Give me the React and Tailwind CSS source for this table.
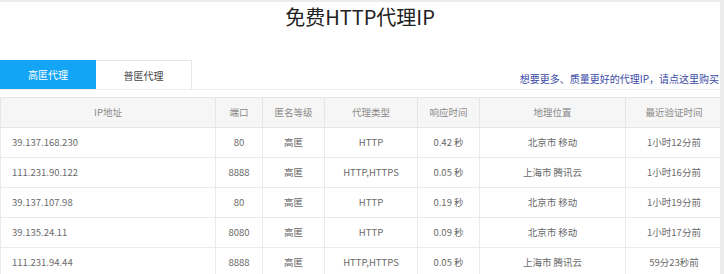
import React from "react";

const ROWS = [
  ["39.137.168.230", "80", "高匿", "HTTP", "0.42 秒", "北京市 移动", "1小时12分前"],
  ["111.231.90.122", "8888", "高匿", "HTTP,HTTPS", "0.05 秒", "上海市 腾讯云", "1小时16分前"],
  ["39.137.107.98", "80", "高匿", "HTTP", "0.19 秒", "北京市 移动", "1小时19分前"],
  ["39.135.24.11", "8080", "高匿", "HTTP", "0.09 秒", "北京市 移动", "1小时17分前"],
  ["111.231.94.44", "8888", "高匿", "HTTP,HTTPS", "0.05 秒", "上海市 腾讯云", "59分23秒前"]
];

const HEADERS = ["IP地址", "端口", "匿名等级", "代理类型", "响应时间", "地理位置", "最近验证时间"];
const WIDTHS = ["w-[215px]", "w-[47px]", "w-[62px]", "w-[93px]", "w-[62px]", "w-[146px]", "w-[97px]"];

export default function App() {
  return (
    <div
      className="w-[724px] h-[274px] overflow-hidden bg-white border-t-2 border-r-4 border-[#ececec]"
      style={{ fontFamily: '"Microsoft YaHei", "Noto Sans CJK SC", "Noto Sans", sans-serif' }}
    >
      {/* Title */}
      <h1 className="text-center text-[20px] leading-[28px] pt-[1px] text-[#222] font-normal">
        免费HTTP代理IP
      </h1>

      {/* Tabs */}
      <div className="mt-[29px] flex items-end justify-between border-b border-[#eee]">
        <div className="flex">
          <div className="w-[96px] h-[29px] bg-[#14a4f5] text-white text-[10px] flex items-center justify-center">
            高匿代理
          </div>
          <div className="w-[96px] h-[29px] border-t border-r border-[#e6e6e6] text-[#444] text-[10px] flex items-center justify-center">
            普匿代理
          </div>
        </div>
        <a className="text-[10px] text-[#3b4aa6] pb-[3px] pr-[1px] leading-[14px]">
          想要更多、质量更好的代理IP，请点这里购买
        </a>
      </div>

      {/* Table */}
      <table className="mt-[7px] border-collapse table-fixed w-[722px] text-[9.5px]">
        <thead>
          <tr className="bg-[#f6f6f6] h-[30px]">
            {HEADERS.map((h, i) => (
              <th key={h} className={`${WIDTHS[i]} border border-[#e6e6e6] font-normal text-[#8a8a8a] text-center`}>
                {h}
              </th>
            ))}
          </tr>
        </thead>
        <tbody>
          {ROWS.map((r) => (
            <tr key={r[0]} className="h-[30px]">
              {r.map((c, i) => (
                <td
                  key={i}
                  className={`border border-[#eaeaea] text-[#6a6a6a] ${i === 0 ? "text-left pl-[11px]" : "text-center"}`}
                >
                  {c}
                </td>
              ))}
            </tr>
          ))}
        </tbody>
      </table>
    </div>
  );
}
